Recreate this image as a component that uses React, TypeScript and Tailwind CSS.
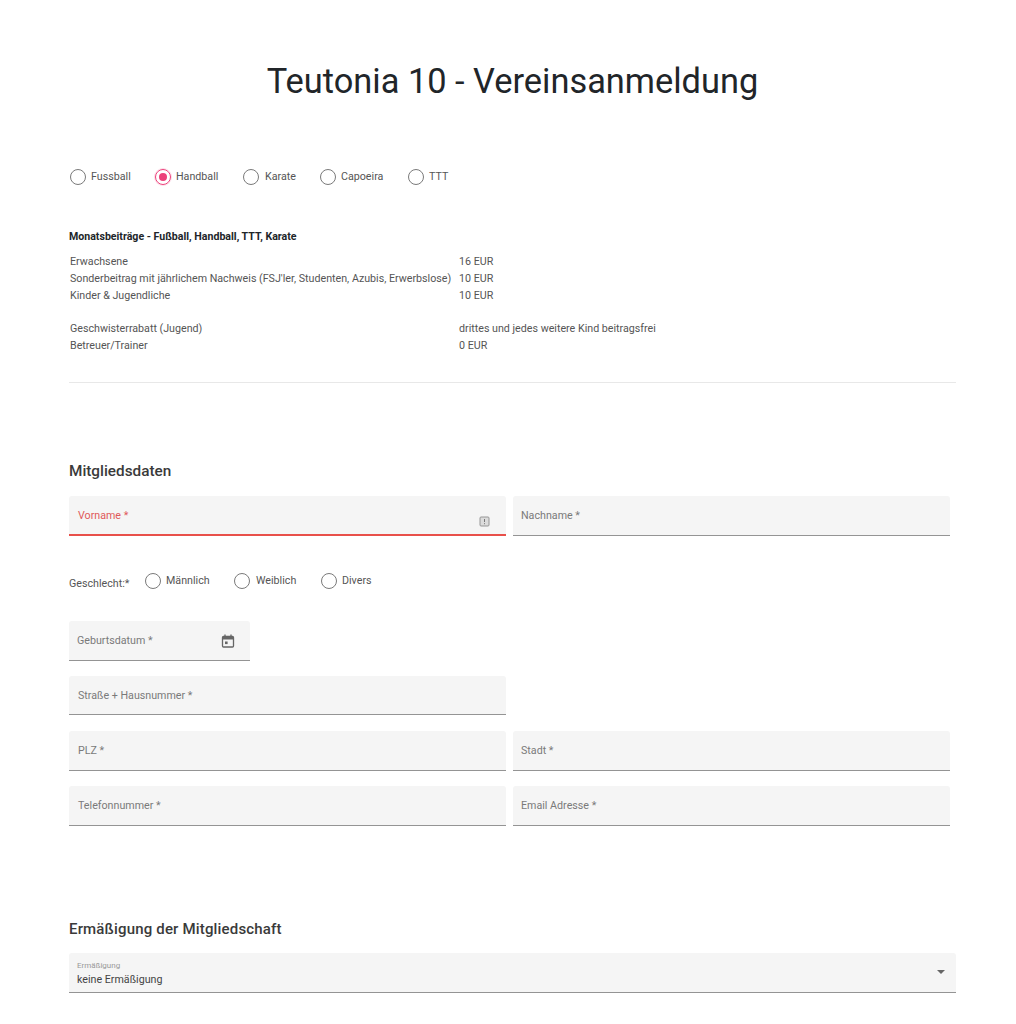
import React from "react";

function Radio({ label, checked, className = "", labelClass = "ml-[5px]" }: { label: string; checked?: boolean; className?: string; labelClass?: string }) {
  return (
    <div className={`flex items-center ${className}`}>
      <span className={`flex h-4 w-4 items-center justify-center rounded-full border ${checked ? "border-[#ec407a] shadow-[0_0_0_1px_rgba(233,30,99,0.15)]" : "border-[#7a7a7a]"}`}>
        {checked && <span className="h-2 w-2 rounded-full bg-[#ec407a]" />}
      </span>
      <span className={`-mt-[1px] text-[10.7px] leading-4 text-[#555] ${labelClass}`}>{label}</span>
    </div>
  );
}

function Field({ label, className = "", error, pad = "pl-[9px]", children }: { label: string; className?: string; error?: boolean; pad?: string; children?: React.ReactNode }) {
  return (
    <div className={`relative flex h-10 items-center rounded-t-[3px] bg-[#f5f5f5] ${pad} ${error ? "border-b-2 border-[#e8504a] pt-[2px]" : "border-b border-[#949494]"} ${className}`}>
      <span className={`text-[10.7px] leading-4 ${error ? "text-[#e05a5a]" : "text-[#7a7a7a]"}`}>{label}</span>
      {children}
    </div>
  );
}

const rows1 = [
  ["Erwachsene", "16 EUR"],
  ["Sonderbeitrag mit jährlichem Nachweis (FSJ'ler, Studenten, Azubis, Erwerbslose)", "10 EUR"],
  ["Kinder & Jugendliche", "10 EUR"],
];
const rows2 = [
  ["Geschwisterrabatt (Jugend)", "drittes und jedes weitere Kind beitragsfrei"],
  ["Betreuer/Trainer", "0 EUR"],
];

function Row({ a, b }: { a: string; b: string }) {
  return (
    <div className="flex h-[17px] items-center pl-px text-[10.7px] leading-[17px] text-[#555]">
      <span className="w-[389px] whitespace-nowrap">{a}</span>
      <span className="whitespace-nowrap">{b}</span>
    </div>
  );
}

export default function App() {
  return (
    <div className="min-h-[1024px] overflow-hidden bg-white pl-[69px] font-['Roboto',sans-serif]">
      <div className="w-[887px]">
        <h1 className="pt-[59px] text-center text-[34.4px] leading-[44px] font-normal text-[#212529]">
          Teutonia 10 - Vereinsanmeldung
        </h1>

        <div className="mt-[66px] flex h-4 items-center">
          <Radio label="Fussball" className="ml-px w-[85px]" />
          <Radio label="Handball" checked className="w-[88px]" />
          <Radio label="Karate" labelClass="ml-[6px]" className="w-[77px]" />
          <Radio label="Capoeira" className="w-[88px]" />
          <Radio label="TTT" />
        </div>

        <div className="mt-[44px] text-[10.6px] leading-4 font-bold text-[#212529]">Monatsbeiträge - Fußball, Handball, TTT, Karate</div>

        <div className="mt-[8px]">
          {rows1.map(([a, b]) => (
            <Row key={a} a={a} b={b} />
          ))}
        </div>
        <div className="mt-[16px]">
          {rows2.map(([a, b]) => (
            <Row key={a} a={a} b={b} />
          ))}
        </div>

        <hr className="mt-[28px] border-t border-[#e8e8e8]" />

        <h2 className="mt-[78px] text-[15.3px] leading-5 font-medium text-[#3a3a3a]">Mitgliedsdaten</h2>

        <div className="mt-[15px] flex gap-[7px]">
          <Field label="Vorname *" error className="w-[437px]">
            <svg className="absolute right-[16px] top-[20px] h-[11px] w-[11px]" viewBox="0 0 11 11" fill="none">
              <rect x="1" y="1" width="9" height="9" rx="1" fill="#dcdcdc" stroke="#969696" />
              <path d="M5.5 3v3M5.5 7.2v1" stroke="#777" strokeWidth="1" />
            </svg>
          </Field>
          <Field label="Nachname *" pad="pl-[8px]" className="w-[437px]" />
        </div>

        <div className="mt-[37px] flex h-4 items-center">
          <span className="mt-[5px] w-[76px] text-[10.7px] leading-4 text-[#555]">Geschlecht:*</span>
          <Radio label="Männlich" className="w-[89px]" />
          <Radio label="Weiblich" labelClass="ml-[6px]" className="w-[87px]" />
          <Radio label="Divers" />
        </div>

        <Field label="Geburtsdatum *" pad="pl-[8px]" className="mt-[32px] w-[181px]">
          <svg className="absolute right-[15px] top-[13px] h-[14px] w-[14px]" viewBox="0 0 14 14" fill="none">
            <rect x="1.5" y="2.5" width="11" height="10.5" rx="1" stroke="#666" strokeWidth="1.3" />
            <path d="M1.5 3h11v2.5h-11z" fill="#666" />
            <path d="M4 .5v2M10 .5v2" stroke="#666" strokeWidth="1.3" />
            <rect x="4" y="7.5" width="2.6" height="2.6" fill="#666" />
          </svg>
        </Field>

        <Field label="Straße + Hausnummer *" className="mt-[15px] h-[39px] w-[437px] pt-[1px]" />

        <div className="mt-[16px] flex gap-[7px]">
          <Field label="PLZ *" className="w-[437px] pt-[1px]" />
          <Field label="Stadt *" pad="pl-[8px]" className="w-[437px] pt-[1px]" />
        </div>

        <div className="mt-[15px] flex gap-[7px]">
          <Field label="Telefonnummer *" className="w-[437px] pt-[1px]" />
          <Field label="Email Adresse *" pad="pl-[8px]" className="w-[437px] pt-[1px]" />
        </div>

        <h2 className="mt-[93px] text-[15px] leading-5 font-medium tracking-[0.17px] text-[#3a3a3a]">Ermäßigung der Mitgliedschaft</h2>

        <div className="relative mt-[14px] h-10 rounded-t-[3px] border-b border-[#949494] bg-[#f5f5f5] pl-2 pt-[8px]">
          <div className="text-[8px] leading-[9px] text-[#999]">Ermäßigung</div>
          <div className="mt-[3px] text-[10.7px] leading-[14px] text-[#444]">keine Ermäßigung</div>
          <span className="absolute right-[11px] top-[17px] h-0 w-0 border-x-[4px] border-t-[4px] border-x-transparent border-t-[#666]" />
        </div>
      </div>
    </div>
  );
}
